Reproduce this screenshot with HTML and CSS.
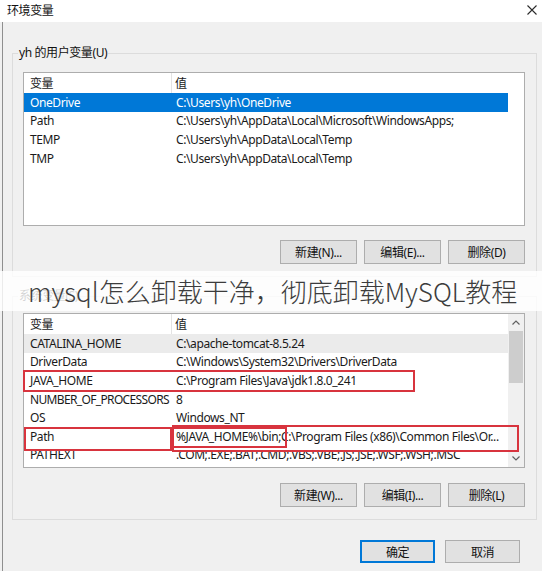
FILE: index.html
```html
<!DOCTYPE html>
<html lang="zh-CN">
<head>
<meta charset="utf-8">
<title>环境变量</title>
<link rel="stylesheet" href="styles.css">
</head>
<body>
<div class="window">
  <div class="titlebar">
    <span class="title">环境变量</span>
    <svg class="close" width="10" height="10" viewBox="0 0 10 10"><path d="M0.5 0.5L9.5 9.5M9.5 0.5L0.5 9.5" stroke="#2b2b2b" stroke-width="1.1" fill="none"/></svg>
  </div>
  <div class="main">
    <fieldset class="group">
      <legend>yh 的用户变量(U)</legend>
      <div class="list list-user">
        <div class="rows">
          <div class="row head"><div class="c1">变量</div><div class="c2">值</div></div>
          <div class="row sel"><div class="c1">OneDrive</div><div class="c2">C:\Users\yh\OneDrive</div></div>
          <div class="row"><div class="c1">Path</div><div class="c2">C:\Users\yh\AppData\Local\Microsoft\WindowsApps;</div></div>
          <div class="row"><div class="c1">TEMP</div><div class="c2">C:\Users\yh\AppData\Local\Temp</div></div>
          <div class="row"><div class="c1">TMP</div><div class="c2">C:\Users\yh\AppData\Local\Temp</div></div>
        </div>
        <div class="blank"></div>
      </div>
      <div class="btns">
        <button class="btn">新建(N)...</button>
        <button class="btn">编辑(E)...</button>
        <button class="btn">删除(D)</button>
      </div>
    </fieldset>

    <fieldset class="group group-sys">
      <legend>系统变量(S)</legend>
      <div class="list list-sys">
        <div class="rows">
          <div class="row head"><div class="c1">变量</div><div class="c2">值</div></div>
          <div class="row hl"><div class="c1">CATALINA_HOME</div><div class="c2">C:\apache-tomcat-8.5.24</div></div>
          <div class="row"><div class="c1">DriverData</div><div class="c2">C:\Windows\System32\Drivers\DriverData</div></div>
          <div class="row"><div class="c1">JAVA_HOME</div><div class="c2">C:\Program Files\Java\jdk1.8.0_241</div></div>
          <div class="row"><div class="c1 tight">NUMBER_OF_PROCESSORS</div><div class="c2">8</div></div>
          <div class="row"><div class="c1">OS</div><div class="c2">Windows_NT</div></div>
          <div class="row"><div class="c1">Path</div><div class="c2">%JAVA_HOME%\bin;C:\Program Files (x86)\Common Files\Or...</div></div>
          <div class="row"><div class="c1">PATHEXT</div><div class="c2">.COM;.EXE;.BAT;.CMD;.VBS;.VBE;.JS;.JSE;.WSF;.WSH;.MSC</div></div>
        </div>
        <div class="sbar">
          <div class="arrow"><svg width="8" height="5" viewBox="0 0 8 5"><path d="M0.5 4.5L4 1L7.5 4.5" stroke="#606060" stroke-width="1.2" fill="none"/></svg></div>
          <div class="track"><div class="thumb"></div></div>
          <div class="arrow"><svg width="8" height="5" viewBox="0 0 8 5"><path d="M0.5 0.5L4 4L7.5 0.5" stroke="#606060" stroke-width="1.2" fill="none"/></svg></div>
        </div>
        <div class="mark mark-java"></div>
        <div class="mark mark-path"></div>
        <div class="mark mark-value"></div>
        <div class="mark mark-bin"></div>
      </div>
      <div class="btns">
        <button class="btn">新建(W)...</button>
        <button class="btn">编辑(I)...</button>
        <button class="btn">删除(L)</button>
      </div>
    </fieldset>

    <div class="footer">
      <button class="btn btn-default">确定</button>
      <button class="btn">取消</button>
    </div>
  </div>
  <div class="banner">mysql怎么卸载干净，彻底卸载MySQL教程</div>
</div>
</body>
</html>
```

FILE: styles.css
```css
* { box-sizing: border-box; }
html, body { margin: 0; padding: 0; }
body {
  width: 542px;
  height: 571px;
  overflow: hidden;
  background: #f0f0f0;
  font-family: "Noto Sans", "Noto Sans CJK SC", sans-serif;
  font-size: 12px;
  letter-spacing: -0.4px;
  color: #1a1a1a;
}
.window {
  position: relative;
  width: 542px;
  height: 571px;
  background: #f0f0f0;
}
.titlebar {
  height: 22px;
  background: #fff;
  display: flex;
  align-items: center;
  justify-content: space-between;
  padding: 0 5px 0 7px;
}
.title { line-height: 16px; color: #111; }
.close { display: block; margin-top: -2px; }

.main {
  display: flow-root;
  margin-left: 2px;
  border-left: 1px solid #8f8f8f;
  height: 549px;
}
.group {
  margin: 23px 5px 0 9px;
  padding: 11px 11px 12px 10px;
  border: 1px solid #dcdcdc;
  min-width: 0;
}
.group legend {
  padding: 0 1px;
  margin-left: -5px;
  line-height: 16px;
  color: #111;
}
.group-sys { margin-top: 11px; padding-top: 9px; }

.list {
  position: relative;
  display: flex;
  background: #fff;
  border: 1px solid #adadad;
  height: 154px;
}
.list-sys { height: 155px; }
.rows { width: 484px; flex: none; }
.blank { flex: 1; }
.row {
  display: flex;
  align-items: center;
  height: 18.6px;
  white-space: nowrap;
}
.row.head { height: 20px; }
.c1 { width: 148px; flex: none; padding-left: 6px; overflow: hidden; }
.c1.tight { letter-spacing: -0.65px; overflow: visible; }
.c2 { flex: 1; padding-left: 4px; overflow: hidden; }
.head .c1 { border-right: 1px solid #e3e3e3; height: 100%; display: flex; align-items: center; }
.head .c2 { padding-left: 3px; }
.row.sel { background: #0078d7; color: #fff; }
.row.hl { background: #ebebeb; }

.sbar {
  width: 16px;
  flex: none;
  display: flex;
  flex-direction: column;
  background: #f0f0f0;
}
.arrow {
  height: 17px;
  display: flex;
  align-items: center;
  justify-content: center;
  flex: none;
}
.track { flex: 1; padding: 0 1px; }
.thumb { height: 52px; background: #cdcdcd; }

.mark {
  position: absolute;
  border: 2px solid #d8343e;
}
.mark-java { left: -1px; top: 56px; width: 392px; height: 22px; }
.mark-path { left: 0; top: 113px; width: 148px; height: 24px; }
.mark-value { left: 148px; top: 111px; width: 347px; height: 27px; }
.mark-bin { left: 148px; top: 113px; width: 115px; height: 21px; }

.btns {
  display: flex;
  justify-content: flex-end;
  gap: 7px;
  margin-top: 14px;
}
.group-sys .btns { margin-top: 15px; }
.btn {
  width: 77px;
  height: 24px;
  padding: 0;
  background: #e1e1e1;
  border: 1px solid #adadad;
  font: inherit;
  letter-spacing: inherit;
  color: #111;
}
.footer {
  display: flex;
  justify-content: flex-end;
  gap: 10px;
  padding-right: 22px;
  margin-top: 20px;
}
.footer .btn { width: 75px; height: 23px; }
.btn-default {
  border-color: #0078d7;
  box-shadow: inset 0 0 0 1px #0078d7;
}

.banner {
  position: absolute;
  left: 0;
  right: 0;
  top: 271px;
  height: 40px;
  background: rgba(255, 255, 255, 0.82);
  font-family: "Noto Sans CJK SC Light", "Noto Sans CJK SC", sans-serif;
  font-size: 26px;
  font-weight: 300;
  line-height: 40px;
  letter-spacing: 0;
  padding-left: 28px;
  color: #3c3c3c;
  white-space: nowrap;
}
```
